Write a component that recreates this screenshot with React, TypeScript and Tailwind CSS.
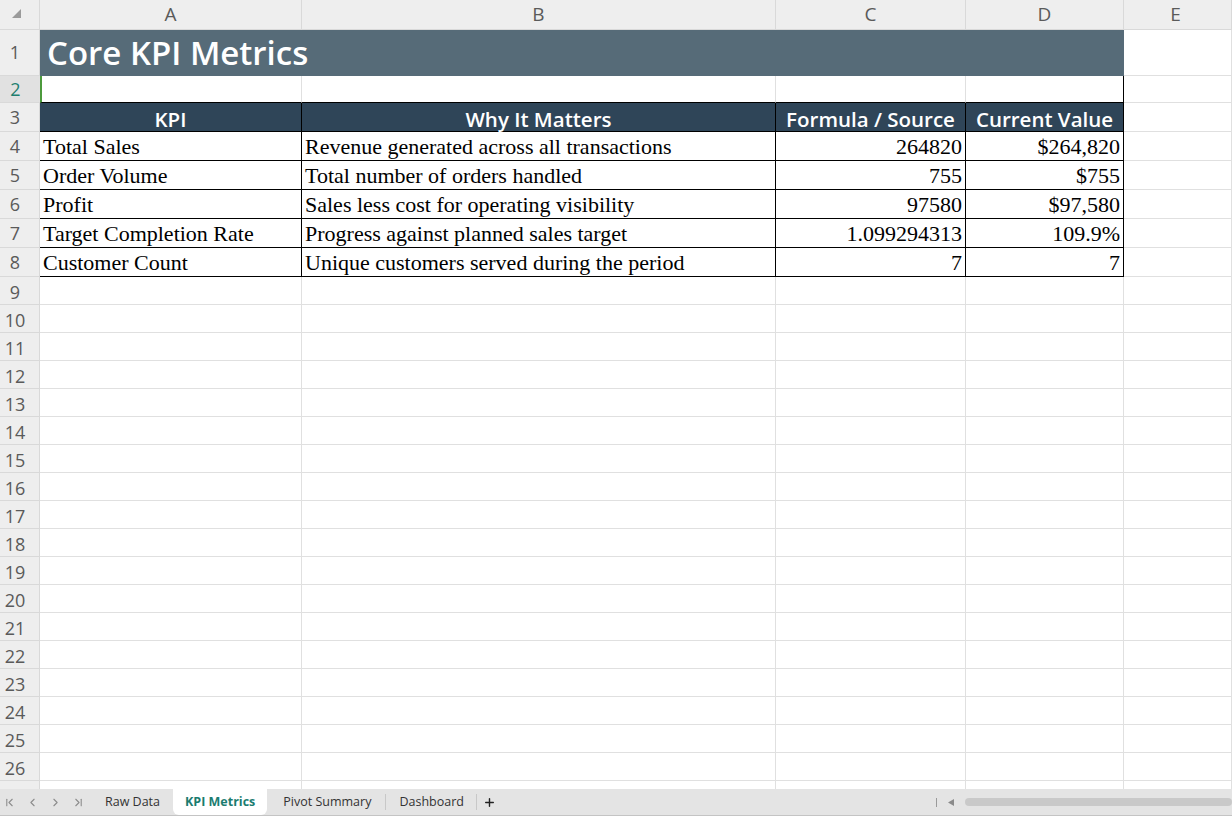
import { ChevronFirst, ChevronLast, ChevronLeft, ChevronRight, Plus } from 'lucide-react';

const grid = 'border-r border-b border-[#e0e0e0]';
const rowHead = 'w-[40px] shrink-0 flex items-center justify-center pr-[9px] bg-[#eeeeee] text-[18px] text-[#5a5a5a] border-r border-b border-[#d9d9d9]';
const serif = { fontFamily: '"Liberation Serif", "Times New Roman", serif' };

const kpis = [
    { name: 'Total Sales', why: 'Revenue generated across all transactions', source: '264820', value: '$264,820' },
    { name: 'Order Volume', why: 'Total number of orders handled', source: '755', value: '$755' },
    { name: 'Profit', why: 'Sales less cost for operating visibility', source: '97580', value: '$97,580' },
    { name: 'Target Completion Rate', why: 'Progress against planned sales target', source: '1.099294313', value: '109.9%' },
    { name: 'Customer Count', why: 'Unique customers served during the period', source: '7', value: '7' },
];

// rows 9..26 are numbered, row 27 only peeks out above the tab bar
const emptyRows = Array.from({ length: 19 }, (_, i) => i + 9);

function ColumnHeader() {
    const letters = [
        { l: 'A', w: 'w-[262px]' },
        { l: 'B', w: 'w-[474px]' },
        { l: 'C', w: 'w-[190px]' },
        { l: 'D', w: 'w-[158px]' },
    ];
    return (
        <div className="flex h-[30px] shrink-0 bg-[#eeeeee] text-[19px] text-[#5a5a5a]">
            <div className="w-[40px] shrink-0 border-r border-b border-[#d9d9d9] flex items-start pl-[12px] pt-[9px]">
                <svg width="9" height="9" viewBox="0 0 9 9">
                    <polygon points="9,0 9,9 0,9" fill="#9a9a9a" />
                </svg>
            </div>
            { letters.map((c) => (
                <div key={ c.l } className={ c.w + ' shrink-0 flex items-center justify-center border-r border-b border-[#d9d9d9]' }>
                    { c.l }
                </div>
            )) }
            <div className="flex-1 flex items-center justify-center border-r border-b border-[#d9d9d9] pr-[4px]">E</div>
        </div>
    );
}

function EmptyCells() {
    return (
        <>
            <div className={ 'w-[262px] shrink-0 ' + grid } />
            <div className={ 'w-[474px] shrink-0 ' + grid } />
            <div className={ 'w-[190px] shrink-0 ' + grid } />
            <div className={ 'w-[158px] shrink-0 ' + grid } />
            <div className={ 'flex-1 ' + grid } />
        </>
    );
}

function Sheet() {
    const head = 'shrink-0 flex items-end justify-center leading-[24px] bg-[#2f4558] text-white text-[20.5px] font-semibold border-r border-b border-black';
    const cell = 'shrink-0 flex items-end leading-[26px] text-[22px] text-black border-r border-b border-black whitespace-nowrap overflow-hidden';
    return (
        <div className="flex-1 flex flex-col overflow-hidden bg-white">
            <ColumnHeader />

            {/* row 1: title band */}
            <div className="flex h-[46px] shrink-0">
                <div className={ rowHead }>1</div>
                <div className="w-[1084px] shrink-0 flex items-end leading-[36px] pl-[7px] pb-[5px] bg-[#566b78] text-white text-[33px] font-semibold">
                    Core KPI Metrics
                </div>
                <div className={ 'flex-1 ' + grid } />
            </div>

            {/* row 2: selected cell */}
            <div className="flex h-[27px] shrink-0">
                <div className="w-[40px] shrink-0 flex items-center justify-center pr-[9px] bg-[#e1e1e1] text-[18px] text-[#1f7f6f] border-b border-[#d9d9d9]">2</div>
                <div className="w-[262px] shrink-0 border-l-2 border-l-[#4c9a3c] border-r border-r-[#e0e0e0] border-b border-b-black" />
                <div className="w-[474px] shrink-0 border-r border-r-[#e0e0e0] border-b border-b-black" />
                <div className="w-[190px] shrink-0 border-r border-r-[#e0e0e0] border-b border-b-black" />
                <div className="w-[158px] shrink-0 border-r border-r-black border-b border-b-black" />
                <div className={ 'flex-1 ' + grid } />
            </div>

            {/* row 3: table header */}
            <div className="flex h-[29px] shrink-0">
                <div className={ rowHead }>3</div>
                <div className={ 'w-[262px] ' + head }>KPI</div>
                <div className={ 'w-[474px] ' + head }>Why It Matters</div>
                <div className={ 'w-[190px] ' + head }>Formula / Source</div>
                <div className={ 'w-[158px] ' + head }>Current Value</div>
                <div className={ 'flex-1 ' + grid } />
            </div>

            { kpis.map((k, i) => (
                <div key={ k.name } className="flex h-[29px] shrink-0" style={ serif }>
                    <div className={ rowHead } style={ { fontFamily: '"Open Sans", sans-serif' } }>{ i + 4 }</div>
                    <div className={ 'w-[262px] pl-[3px] ' + cell }>{ k.name }</div>
                    <div className={ 'w-[474px] pl-[3px] ' + cell }>{ k.why }</div>
                    <div className={ 'w-[190px] justify-end pr-[3px] ' + cell }>{ k.source }</div>
                    <div className={ 'w-[158px] justify-end pr-[3px] ' + cell }>{ k.value }</div>
                    <div className={ 'flex-1 ' + grid } />
                </div>
            )) }

            { emptyRows.map((n) => (
                <div key={ n } className="flex h-[28px] shrink-0">
                    <div className={ rowHead + ' pt-[4px]' }>{ n < 27 ? n : '' }</div>
                    <EmptyCells />
                </div>
            )) }
        </div>
    );
}

function TabBar() {
    return (
        <div className="flex h-[27px] shrink-0 items-stretch bg-[#e4e4e4] border-b border-[#c4c4c4] text-[12.5px] text-[#333]">
            <div className="flex items-center gap-[10px] pl-[3px] w-[93px] text-[#8c8c8c]">
                <ChevronFirst size={ 13 } strokeWidth={ 2 } />
                <ChevronLeft size={ 13 } strokeWidth={ 2 } />
                <ChevronRight size={ 13 } strokeWidth={ 2 } />
                <ChevronLast size={ 13 } strokeWidth={ 2 } />
            </div>
            <div className="flex items-center px-[12px]">Raw Data</div>
            <div className="flex items-center ml-[1px] px-[12px] bg-white rounded-b-[6px] font-bold text-[#1b7c70]">KPI Metrics</div>
            <div className="flex items-center pl-[16px] pr-[14px]">Pivot Summary</div>
            <div className="self-center h-[16px] w-px bg-[#c8c8c8]" />
            <div className="flex items-center pl-[13px] pr-[12px]">Dashboard</div>
            <div className="self-center h-[16px] w-px bg-[#c8c8c8]" />
            <div className="flex items-center pl-[6px] text-[#222]">
                <Plus size={ 13 } strokeWidth={ 2.6 } />
            </div>
            <div className="flex-1" />
            <div className="flex items-center gap-[11px] w-[296px]">
                <div className="h-[9px] w-px bg-[#9a9a9a]" />
                <svg width="6" height="7" viewBox="0 0 6 7">
                    <polygon points="6,0 6,7 0,3.5" fill="#8a8a8a" />
                </svg>
                <div className="flex-1 h-[8px] rounded-full bg-[#c9c9c9]" />
            </div>
        </div>
    );
}

export default function App() {
    return (
        <div className="flex flex-col w-[1232px] h-[816px] overflow-hidden bg-white" style={ { fontFamily: '"Open Sans", "Noto Sans", sans-serif' } }>
            <Sheet />
            <TabBar />
        </div>
    );
}
